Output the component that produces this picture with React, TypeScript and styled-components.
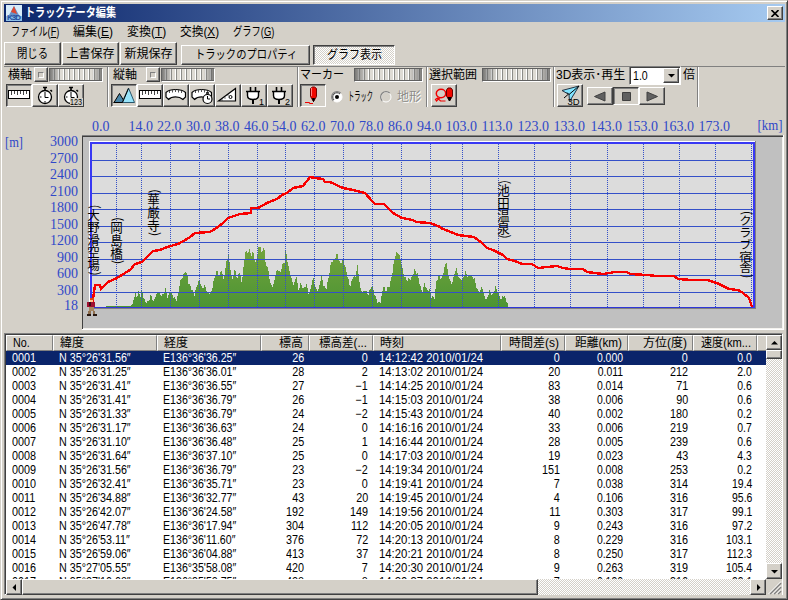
import React, { useLayoutEffect, useRef, useState } from "react";
import styled, { createGlobalStyle, css } from "styled-components";

const FACE = "#d4d0c8";
const SANS = '"Liberation Sans", "Noto Sans CJK JP", sans-serif';
const CHECKER = "repeating-conic-gradient(#ffffff 0 25%, #d4d0c8 0 50%) 0 0 / 2px 2px";

const Global = createGlobalStyle`
  *, *::before, *::after { box-sizing: border-box; }
  body { margin: 0; background: ${FACE}; font: 12px/14px ${SANS}; color: #000; }
`;

const raised = css`
  border: 1px solid;
  border-color: #ffffff #404040 #404040 #ffffff;
  box-shadow: inset -1px -1px 0 #808080;
`;
const pressed = css`
  border: 1px solid;
  border-color: #404040 #ffffff #ffffff #404040;
  box-shadow: inset 1px 1px 0 #808080;
`;

const Window = styled.div`
  width: 788px;
  height: 600px;
  display: flex;
  flex-direction: column;
  padding: 3px 2px 3px 2px;
  background: ${FACE};
  border: 1px solid;
  border-color: ${FACE} #404040 #404040 ${FACE};
  box-shadow: inset 1px 1px 0 #ffffff, inset -1px -1px 0 #808080;
  overflow: hidden;
`;

const TitleBar = styled.header`
  height: 18px;
  flex: none;
  margin: 0 0 0 1px;
  display: flex;
  align-items: center;
  gap: 3px;
  padding: 0 2px;
  background: linear-gradient(90deg, #0a246a, #a6caf0);
  color: #fff;
  font-weight: 700;
`;

const CloseButton = styled.button`
  ${raised}
  width: 16px;
  height: 14px;
  margin-left: auto;
  padding: 0;
  display: flex;
  align-items: center;
  justify-content: center;
  background: ${FACE};
`;

const MenuBar = styled.nav`
  height: 19px;
  flex: none;
  display: flex;
  align-items: center;
  padding-left: 8px;
  gap: 14px;
`;

const CommandRow = styled.div`
  height: 25px;
  flex: none;
  display: flex;
  align-items: flex-end;
  padding: 0 0 1px 1px;
  gap: 1px;
`;

const PushButton = styled.button<{ $w: number; $h: number; $down?: boolean; $gap?: number }>`
  ${(p) => (p.$down ? pressed : raised)}
  width: ${(p) => p.$w}px;
  height: ${(p) => p.$h}px;
  margin-left: ${(p) => p.$gap ?? 0}px;
  padding: 0;
  display: flex;
  align-items: center;
  justify-content: center;
  background: ${(p) => (p.$down ? CHECKER : FACE)};
  font: inherit;
`;

const ToolStrip = styled.div`
  height: 43px;
  flex: none;
  display: flex;
  margin-left: 1px;
  border-top: 1px solid #808080;
`;

const Group = styled.section<{ $w: number }>`
  width: ${(p) => p.$w}px;
  height: 40px;
  padding: 0 0 0 2px;
  display: flex;
  flex-direction: column;
  justify-content: space-between;
  border-right: 1px solid #808080;
  box-shadow: 1px 0 0 #ffffff;
`;

const GroupHead = styled.div<{ $inset?: number }>`
  height: 15px;
  display: flex;
  align-items: center;
  padding-left: ${(p) => p.$inset ?? 0}px;
`;

const GroupTools = styled.div<{ $inset?: number }>`
  height: 23px;
  display: flex;
  align-items: center;
  padding-left: ${(p) => p.$inset ?? 0}px;
`;

const IconButton = styled.button<{ $down?: boolean; $h?: number }>`
  ${(p) => (p.$down ? pressed : raised)}
  width: 26px;
  height: ${(p) => p.$h ?? 23}px;
  padding: 0;
  display: flex;
  background: ${FACE};
  & > svg { margin: -1px; flex: none; }
`;

const ResetButton = styled.button<{ $gap: number }>`
  ${raised}
  width: 14px;
  height: 15px;
  margin: 0 1px 0 ${(p) => p.$gap}px;
  padding: 0;
  display: flex;
  flex: none;
  align-items: center;
  justify-content: center;
  background: ${FACE};
  &::after {
    content: "";
    width: 6px;
    height: 6px;
    flex: none;
    border: 1px solid;
    border-color: #808080 #fff #fff #808080;
    background: ${FACE};
  }
`;

const Dial = styled.div<{ $w: number; $gap?: number }>`
  width: ${(p) => p.$w}px;
  height: 14px;
  flex: none;
  margin-left: ${(p) => p.$gap ?? 0}px;
  border: 1px solid;
  border-color: #606060 #ffffff #ffffff #606060;
  background:
    linear-gradient(90deg, rgba(80,80,80,.7), rgba(110,110,110,.5) 8%, rgba(130,130,130,.3) 15%, transparent 20%, transparent 80%, rgba(130,130,130,.3) 85%, rgba(110,110,110,.5) 92%, rgba(80,80,80,.7)),
    repeating-linear-gradient(90deg, #dedbd4 0 3px, #ffffff 3px 4px, #8c8c88 4px 5px);
  box-shadow: inset 0 -1px 0 #606060;
`;

const Radio = styled.label<{ $off?: boolean; $gap: number }>`
  display: flex;
  align-items: center;
  gap: 5px;
  margin: 3px 0 0 ${(p) => p.$gap}px;
  color: ${(p) => (p.$off ? "#8c8c88" : "#000")};
  text-shadow: ${(p) => (p.$off ? "1px 1px 0 #fff" : "none")};
`;

const Combo = styled.div`
  width: 52px;
  height: 19px;
  margin: 1px 2px 0 4px;
  display: flex;
  flex: none;
  padding: 1px;
  background: #fff;
  border: 1px solid;
  border-color: #808080 #fff #fff #808080;
  box-shadow: inset 1px 1px 0 #404040;
`;
const ComboValue = styled.span`
  flex: 1;
  padding: 1px 0 0 2px;
  line-height: 13px;
`;
const ArrowButton = styled.button<{ $w?: number; $h?: number }>`
  ${raised}
  flex: none;
  width: ${(p) => p.$w ?? 16}px;
  height: ${(p) => p.$h ?? 15}px;
  padding: 0;
  display: flex;
  align-items: center;
  justify-content: center;
  background: ${FACE};
`;

const ChartBox = styled.figure`
  margin: 0 0 0 1px;
  height: 224px;
  flex: none;
`;

const ChartSvg = styled.svg`
  display: block;
  & text { font-family: "Liberation Serif", serif; font-size: 14px; fill: #3048c8; }
  & text.place {
    font-family: "Noto Sans CJK JP", sans-serif;
    font-size: 12.5px;
    fill: #000;
    writing-mode: vertical-rl;
  }
`;

const ListView = styled.section`
  width: 779px;
  height: 262px;
  flex: none;
  margin-left: 1px;
  padding: 1px 0 0 1px;
  display: grid;
  grid-template-columns: 760px 16px;
  grid-template-rows: 244px 16px;
  border: 1px solid;
  border-color: #808080 #fff #fff #808080;
  box-shadow: inset 1px 1px 0 #404040;
  background: #fff;
`;

const Rows = styled.div`
  overflow: hidden;
`;

const COLS = "47px 104px 104px 48px 64px 128px 64px 63px 65px 64px 9px";

const HeaderRow = styled.div`
  display: grid;
  grid-template-columns: ${COLS};
  height: 16px;
`;
const HeaderCell = styled.div<{ $right?: boolean }>`
  display: flex;
  align-items: center;
  justify-content: ${(p) => (p.$right ? "flex-end" : "flex-start")};
  padding: 0 5px 0 6px;
  background: ${FACE};
  overflow: hidden;
  border: 1px solid;
  border-color: #fff #808080 #808080 #fff;
`;

const Row = styled.div<{ $selected?: boolean }>`
  display: grid;
  grid-template-columns: ${COLS};
  height: 14px;
  background: ${(p) => (p.$selected ? "#0a246a" : "#fff")};
  color: ${(p) => (p.$selected ? "#fff" : "#000")};
`;
const Cell = styled.div<{ $right?: boolean; $scale: number }>`
  text-align: ${(p) => (p.$right ? "right" : "left")};
  padding: 0 5px 0 6px;
  line-height: 14px;
  white-space: nowrap;
  & > span {
    display: inline-block;
    transform: scaleX(${(p) => p.$scale});
    transform-origin: ${(p) => (p.$right ? "right" : "left")};
  }
`;

const VScroll = styled.div`
  display: flex;
  flex-direction: column;
  background: ${CHECKER};
`;
const HScroll = styled.div`
  display: flex;
  background: ${CHECKER};
`;
const Thumb = styled.div<{ $w: number; $h: number }>`
  ${raised}
  width: ${(p) => p.$w}px;
  height: ${(p) => p.$h}px;
  background: ${FACE};
`;
const Spring = styled.div`
  flex: 1;
`;
const Grip = styled.div`
  background: ${FACE};
`;

const FitBox = styled.span<{ $w: number }>`
  display: block;
  flex: none;
  width: ${(p) => p.$w}px;
  white-space: nowrap;
  line-height: 14px;
`;
const FitInner = styled.span`
  display: inline-block;
  transform-origin: left center;
`;

/* Condenses or widens a label so that it fills exactly the given width. */
function Fit({ w, children }: { w: number; children: React.ReactNode }) {
  const ref = useRef<HTMLSpanElement>(null);
  const [k, setK] = useState(1);
  useLayoutEffect(() => {
    if (ref.current && ref.current.offsetWidth) setK(w / ref.current.offsetWidth);
  }, [w]);
  return (
    <FitBox $w={w}>
      <FitInner ref={ref} style={{ transform: `scaleX(${k})` }}>{children}</FitInner>
    </FitBox>
  );
}

/* ---------- icons ---------- */

const Icon = ({ children, h = 23 }: { children: React.ReactNode; h?: number }) => (
  <svg width="26" height={h} viewBox={`0 0 26 ${h}`} fill="none" stroke="#000">{children}</svg>
);

const Ruler = () => (
  <Icon>
    <path d="M2.500 6.500h21v8h-21z" fill="#fff" shapeRendering="crispEdges" />
    <path d="M5.500 7v4M8.500 7v3M11.500 7v4M14.500 7v3M17.500 7v4M20.500 7v3" stroke="#444" shapeRendering="crispEdges" />
  </Icon>
);
const Watch = ({ digits }: { digits?: boolean }) => (
  <Icon>
    <path d="M11 3.500h4M13 4v3M18.500 6l1.500 1.500" strokeWidth="1.600" />
    <circle cx="13" cy="13" r="6.500" fill="#fff" strokeWidth="1.300" />
    <path d="M13 8v5.500h3.500M8 13h1.500M13 17v1.500" />
    {digits && (
      <>
        <path d="M12 14h13v8H12z" fill={FACE} stroke="none" />
        <text x="12" y="21" fontSize="8.500" textLength="12" lengthAdjust="spacingAndGlyphs" fill="#000" stroke="none">123</text>
      </>
    )}
  </Icon>
);
const Mountains = () => (
  <Icon>
    <path d="M3 18.500L8.500 9.500L14 18.500z" fill="#4a86a8" />
    <path d="M11 18.500L17.500 4L23.500 18.500z" fill="#98e4fa" stroke="#28566c" />
    <path d="M2.500 18.500h9l6-14" />
  </Icon>
);
const Gauge = ({ clock }: { clock?: boolean }) => (
  <Icon>
    <path d="M3 8.500C7 4.500 18 4.500 22.500 8.500V13l-2.500 2.500C16 12 9 12 5.500 15.500L3 13z" fill="#fff" strokeWidth="1.200" />
    <path d="M6.500 7v2M9.500 6v2.500M12.500 5.500v2.500M15.500 6v2.500M18.500 7v2" stroke="#555" />
    {clock && (
      <>
        <path d="M17 9h3" strokeWidth="1.500" />
        <circle cx="18.500" cy="15" r="4.500" fill="#fff" strokeWidth="1.200" />
        <path d="M18.500 12v3h2.500" />
      </>
    )}
  </Icon>
);
const SetSquare = () => (
  <Icon>
    <path d="M3.500 17L20.500 4.500V17z" fill="#fff" strokeWidth="1.200" />
    <circle cx="15.500" cy="13" r="1.500" />
    <path d="M7 15.500v1M10 13.500v1M13 10.500v1" />
  </Icon>
);
const Plug = ({ n }: { n: string }) => (
  <Icon>
    <path d="M9.500 3v5M14.500 3v5" strokeWidth="1.600" />
    <path d="M5 7.500h14M6.500 8v3.500c0 2.500 2.500 4 5.500 4s5.500-1.500 5.500-4V8" fill="#fff" strokeWidth="1.400" />
    <path d="M12 15.500v4.500" strokeWidth="2" />
    <text x="18" y="21" fontSize="9" fill="#000" stroke="none">{n}</text>
  </Icon>
);
const Pencil = () => (
  <Icon>
    <path d="M10.500 4.500l2-1.500h2l2 1.500v8l-3 5-3-5z" fill="#f00800" stroke="#700" />
    <path d="M11.500 4v8" stroke="#ff8080" />
    <path d="M12.500 14.500h2l-1 3z" fill="#000" />
    <path d="M5 18.500h4.500v1h3.500" stroke="#f00000" />
  </Icon>
);
const LassoPencil = () => (
  <Icon>
    <ellipse cx="10" cy="9.500" rx="4.700" ry="4.200" stroke="#f00000" strokeWidth="1.500" />
    <path d="M9 13.500l-3.500 3.500-1-1.500 2-1.500 3 3h5" stroke="#f00000" strokeWidth="1.200" />
    <path d="M15.500 6l1.500-2h3l1.500 2v6l-3 5-3-5z" fill="#f00800" stroke="#600" />
    <path d="M17 13.500h3l-1.500 3.500z" fill="#000" />
  </Icon>
);
const Plane3D = () => (
  <Icon>
    <path d="M5 6.500L22 2L12.500 17.500L12 10.500z" fill="#80e4ff" stroke="#234" />
    <path d="M22 2L12 10.500L10 8.500M7 14L11 10.500" />
    <text x="10.500" y="21" fontSize="9.500" textLength="12" fill="#000" stroke="none">3D</text>
  </Icon>
);
const Transport = ({ d }: { d: string }) => (
  <Icon h={19}><path d={d} fill="#606060" stroke="#404040" /></Icon>
);
const Arrow = ({ dir }: { dir: "up" | "down" | "left" | "right" }) => {
  const d = {
    up: "M0 5.500h7L3.500 2z",
    down: "M0 2h7L3.500 5.500z",
    left: "M5 0v7L1.500 3.500z",
    right: "M2 0v7L5.500 3.500z",
  }[dir];
  return <svg width="7" height="7"><path d={d} /></svg>;
};
const RadioMark = ({ on }: { on?: boolean }) => (
  <svg width="12" height="12" fill="none">
    <circle cx="6" cy="6" r="5" fill={on ? "#fff" : FACE} stroke="#fff" />
    <path d="M2.200 9.800A5.300 5.300 0 0 1 9.800 2.200" stroke="#808080" strokeWidth="1.200" />
    {on && <path d="M3 9A4.200 4.200 0 0 1 9 3" stroke="#404040" />}
    {on && <circle cx="6" cy="6" r="2" fill="#000" />}
  </svg>
);
const AppIcon = () => (
  <svg width="16" height="16">
    <path d="M0 0h16v16H0z" fill="#d8ecfa" />
    <path d="M0 11h16v5H0z" fill="#8cc0e8" />
    <path d="M8 1L2 12h12z" fill="#6890c8" />
    <path d="M8 1L5 7l6 2z" fill="#e04830" />
    <text x="1" y="15" fontSize="8" fontWeight="700" textLength="14" fill="#2850a0">K3D</text>
  </svg>
);

/* ---------- chart ---------- */

type Trace = { x0: number; p: number[] };

/* Samples are thirds of a pixel, measured from (x0, 110). */
const expand = (traces: Trace[]): [number, number][] =>
  traces.flatMap(({ x0, p }) => {
    const out: [number, number][] = [];
    for (let i = 0; i < p.length; i += 2) out.push([x0 + p[i] / 3, 110 + p[i + 1] / 3]);
    return out;
  });

const track = expand([
  { x0: 0, p: [275,592, 281,545, 285,526, 299,524, 303,538, 310,530, 325,515, 350,505, 375,490, 390,480, 405,463, 425,457, 440,440, 460,423, 480,421, 500,411, 535,403, 560,388] },
  { x0: 190, p: [0,380, 15,368, 60,365, 75,356, 100,340, 115,323, 150,313, 182,309, 184,295, 205,293, 230,280, 260,267, 275,254, 290,250, 310,234, 340,227, 360,201, 375,204, 398,206, 405,215, 420,216, 460,233, 490,240, 525,250, 545,272, 555,281] },
  { x0: 380, p: [12,282, 22,290, 40,308, 65,323, 100,329, 107,337, 150,339, 175,347, 190,358, 235,374, 282,382, 305,400, 322,415, 340,419, 370,434, 380,448, 405,452, 425,463, 455,463, 475,475, 500,471, 530,467, 550,473] },
  { x0: 570, p: [0,476, 38,477, 50,486, 98,491, 135,485, 170,487, 180,492, 230,494, 260,498, 312,499, 325,508, 365,509, 410,511, 440,520, 478,537, 505,540, 520,550, 538,565, 547,592] },
]);

const ground = expand([
  { x0: 0, p: [300,592, 320,589, 390,588, 398,580, 402,565, 406,548, 410,562, 416,545, 421,560, 426,538, 430,560, 436,576, 445,575, 450,565, 453,553, 460,576, 466,560, 475,545, 480,555, 490,553, 497,537, 503,562, 512,543, 520,562, 530,570, 536,545, 540,515, 548,500, 556,483, 563,500, 566,522] },
  { x0: 190, p: [0,525, 8,545, 14,555, 18,535, 28,508, 36,535, 45,525, 52,548, 62,550, 68,530, 75,495, 82,483, 88,500, 94,478, 100,508, 106,480, 110,450, 115,436, 120,465, 126,512, 135,476, 142,508, 148,483, 155,517, 160,480, 166,423, 172,430, 178,418, 184,437, 190,425, 196,462, 202,435, 206,412, 212,408, 215,432, 222,405, 226,455, 235,480, 242,525, 250,528, 256,495, 264,476, 270,490, 278,462, 284,455, 287,415, 294,465, 304,505, 312,527, 319,495, 325,542, 332,520, 340,537, 350,523, 357,557, 364,525, 371,502, 376,535, 385,542, 394,496, 402,530, 410,535, 416,500, 424,455, 432,450, 442,430, 450,462, 460,448, 468,480, 480,530, 490,498, 496,505, 502,463, 506,495, 512,540, 520,548, 527,538, 534,557, 545,526, 552,545, 556,560, 564,578, 572,577, 580,528, 588,545, 594,530] },
  { x0: 380, p: [28,530, 36,495, 42,455, 48,430, 56,430, 64,460, 70,490, 80,510, 95,505, 104,480, 114,495, 120,525, 127,547, 134,518, 140,540, 150,540, 154,560, 164,563, 170,510, 178,498, 184,510, 192,480, 199,453, 204,490, 214,524, 222,500, 228,473, 238,508, 248,508, 257,486, 264,500, 270,493, 284,508, 292,540, 300,547, 306,525, 312,555, 320,570, 328,543, 338,557, 347,530, 356,550, 364,572, 368,555, 376,562, 382,580, 384,592] },
]);

const at = (pts: [number, number][], x: number) => {
  const i = pts.findIndex((q) => q[0] >= x);
  if (i <= 0) return pts[i === 0 ? 0 : pts.length - 1][1];
  const [a, b] = [pts[i - 1], pts[i]];
  return a[1] + ((b[1] - a[1]) * (x - a[0])) / (b[0] - a[0] || 1);
};

let terrain = "M100 307";
for (let x = 100; x < 508; x++) {
  const y = Math.round(at(ground, x + 0.5) + (x > 133 ? ((x * 7) % 3) - 1 : 0));
  terrain += `V${Math.min(307, y)}H${x + 1}`;
}
terrain += "V307z";

const hLines = [160, 176, 193, 209, 226, 242, 259, 275, 292];
const vLines = [116, 141, 170, 199, 228, 257, 285, 314, 343, 372, 401, 430, 462, 498, 534, 570, 607, 643, 679, 715, 751];
const yLabels = ["3000", "2700", "2400", "2100", "1800", "1500", "1200", "900", "600", "300", "18"];
const yBase = [146, 163, 179, 196, 212, 229, 245, 262, 278, 295, 310];
const xLabels: [number, string][] = [
  [92, "0.0"], [128.500, "14.0"], [157, "22.0"], [186, "30.0"], [215, "38.0"], [244, "46.0"], [272, "54.0"],
  [301, "62.0"], [330, "70.0"], [359, "78.0"], [388, "86.0"], [417, "94.0"], [445.500, "103.0"], [481.500, "113.0"],
  [517.500, "123.0"], [553.500, "133.0"], [590.500, "143.0"], [626.500, "153.0"], [662.500, "163.0"], [698.500, "173.0"],
];
const places: [number, number, number, string][] = [
  [93.500, 204.500, 71, "大野滑空場"],
  [116.500, 217, 47, "岡島橋"],
  [153.500, 189, 47, "華厳寺"],
  [503.500, 180, 59, "池田温泉"],
  [745.500, 211, 67, "クラブ宿舎"],
];

const Chart = () => (
  <ChartBox>
    <ChartSvg width="780" height="224" viewBox="4 109 780 224">
      <defs>
        <linearGradient id="hill" x1="0" y1="0" x2="0" y2="1">
          <stop offset="0" stopColor="#74a43c" />
          <stop offset="1" stopColor="#4c9434" />
        </linearGradient>
      </defs>
      {xLabels.map(([x, s]) => <text key={s} x={x} y="131">{s}</text>)}
      <text x="757.500" y="130" textLength="25" lengthAdjust="spacingAndGlyphs">[km]</text>
      <text x="5" y="147" textLength="18" lengthAdjust="spacingAndGlyphs">[m]</text>
      {yLabels.map((s, i) => <text key={s} x="78" y={yBase[i]} textAnchor="end">{s}</text>)}
      <g shapeRendering="crispEdges">
        <path d="M82 135h702v195H82z" fill="#fff" />
        <path d="M82 135h701v194H82z" fill="#808080" />
        <path d="M83 136h700v193H83z" fill="#c0c0c0" />
        <path d="M82.500 329V136.500H783" fill="none" stroke="#404040" />
        <path d="M83 328.500H782.500V137" fill="none" stroke="#f4f2ee" />
        <path d="M89 141h667v168H89z" fill="#808080" />
        <path d="M89 141h666v167H89z" fill="#fff" />
        <path d="M90 142h665v166H90z" fill="#dcdcdc" />
        <path d={terrain} fill="url(#hill)" />
        {vLines.map((x) => <path key={x} d={`M${x + 0.5} 144V307`} stroke="#3450c8" strokeDasharray="1 1" />)}
        {hLines.map((y) => <path key={y} d={`M90 ${y + 0.5}H755`} stroke="#3450c8" />)}
        <path d="M90 307.500H755" stroke="#3038d8" />
        <path d="M90 143H754M91 142V308M754 142V308" stroke="#3838f4" strokeWidth="2" />
      </g>
      <polyline points={track.map((q) => q.map(Math.round).join(",")).join(" ")} fill="none" stroke="#f80000" strokeWidth="2.400" shapeRendering="crispEdges" />
      {places.map(([x, y, len, s]) => (
        <text key={s} className="place" x={x} y={y} textLength={len} lengthAdjust="spacingAndGlyphs">
          <tspan dx="2.500">(</tspan><tspan dx="-2.500">{s}</tspan><tspan dx="2.500">)</tspan>
        </text>
      ))}
      <g shapeRendering="crispEdges">
        <path d="M90 298h4v2h-4z" fill="#e04810" />
        <path d="M90 300h3v2h-3z" fill="#ffc890" />
        <path d="M87 302h8v5H87z" fill="#a01030" />
        <path d="M89 302h2v4h-2z" fill="#400818" />
        <path d="M89 307h5v4h-5z" fill="#a88860" />
        <path d="M88 311h3v3h-3zM93 311h2v3h-2z" fill="#907050" />
        <path d="M87 314h4v2h-4zM93 314h4v2h-4z" fill="#281810" />
      </g>
    </ChartSvg>
  </ChartBox>
);

/* ---------- list ---------- */

const columns: { label: string; w: number; right?: boolean; scale: number }[] = [
  { label: "No.", w: 17, scale: 0.9 },
  { label: "緯度", w: 24, scale: 0.895 },
  { label: "経度", w: 24, scale: 0.885 },
  { label: "標高", w: 24, right: true, scale: 0.9 },
  { label: "標高差(...", w: 48, right: true, scale: 0.9 },
  { label: "時刻", w: 24, scale: 0.945 },
  { label: "時間差(s)", w: 50, right: true, scale: 0.9 },
  { label: "距離(km)", w: 47, right: true, scale: 0.87 },
  { label: "方位(度)", w: 44, right: true, scale: 0.9 },
  { label: "速度(km...", w: 50, right: true, scale: 0.87 },
];

const points = `31.56|36'36.25|26|0|14:12:42|0|0.000|0|0.0
31.25|36'36.01|28|2|14:13:02|20|0.011|212|2.0
31.41|36'36.55|27|-1|14:14:25|83|0.014|71|0.6
31.41|36'36.79|26|-1|14:15:03|38|0.006|90|0.6
31.33|36'36.79|24|-2|14:15:43|40|0.002|180|0.2
31.17|36'36.63|24|0|14:16:16|33|0.006|219|0.7
31.10|36'36.48|25|1|14:16:44|28|0.005|239|0.6
31.64|36'37.10|25|0|14:17:03|19|0.023|43|4.3
31.56|36'36.79|23|-2|14:19:34|151|0.008|253|0.2
32.41|36'35.71|23|0|14:19:41|7|0.038|314|19.4
34.88|36'32.77|43|20|14:19:45|4|0.106|316|95.6
42.07|36'24.58|192|149|14:19:56|11|0.303|317|99.1
47.78|36'17.94|304|112|14:20:05|9|0.243|316|97.2
53.11|36'11.60|376|72|14:20:13|8|0.229|316|103.1
59.06|36'04.88|413|37|14:20:21|8|0.250|317|112.3
27'05.55|35'58.08|420|7|14:20:30|9|0.263|319|105.4
27'10.08|35'52.75|428|8|14:20:37|7|0.190|316|99.1`
  .split("\n")
  .map((line, i) => {
    const [lat, lon, alt, diff, time, ...rest] = line.split("|");
    return [
      String(i + 1).padStart(4, "0"),
      `N 35°${lat.includes("'") ? lat : "26'" + lat}″`,
      `E136°${lon}″`,
      alt,
      diff.replace("-", "−"),
      `${time} 2010/01/24`,
      ...rest,
    ];
  });

const menus: [string, string, number][] = [
  ["ファイル", "F", 48], ["編集", "E", 40], ["変換", "T", 39], ["交換", "X", 39], ["グラフ", "G", 41],
];

export default function App() {
  return (
    <>
      <Global />
      <Window>
        <TitleBar>
          <AppIcon />
          <Fit w={91}>トラックデータ編集</Fit>
          <CloseButton>
            <svg width="8" height="7"><path d="M0.500 0L7.500 7M7.500 0L0.500 7" stroke="#000" strokeWidth="1.600" /></svg>
          </CloseButton>
        </TitleBar>
        <MenuBar>
          {menus.map(([label, key, w]) => (
            <Fit key={key} w={w}>{label}(<u>{key}</u>)</Fit>
          ))}
        </MenuBar>
        <CommandRow>
          <PushButton $w={57} $h={23}><Fit w={31}>閉じる</Fit></PushButton>
          <PushButton $w={57} $h={23}><Fit w={48}>上書保存</Fit></PushButton>
          <PushButton $w={57} $h={23}><Fit w={48}>新規保存</Fit></PushButton>
          <PushButton $w={129} $h={20} $gap={3}><Fit w={102}>トラックのプロパティ</Fit></PushButton>
          <PushButton $w={82} $h={20} $gap={2} $down><Fit w={55}>グラフ表示</Fit></PushButton>
        </CommandRow>
        <ToolStrip>
          <Group $w={104}>
            <GroupHead $inset={2}>
              <Fit w={24}>横軸</Fit>
              <ResetButton $gap={2} />
              <Dial $w={54} />
            </GroupHead>
            <GroupTools>
              <IconButton $down><Ruler /></IconButton>
              <IconButton><Watch /></IconButton>
              <IconButton><Watch digits /></IconButton>
            </GroupTools>
          </Group>
          <Group $w={190}>
            <GroupHead $inset={3}>
              <Fit w={24}>縦軸</Fit>
              <ResetButton $gap={9} />
              <Dial $w={54} />
            </GroupHead>
            <GroupTools $inset={1}>
              <IconButton $down><Mountains /></IconButton>
              <IconButton><Ruler /></IconButton>
              <IconButton><Gauge /></IconButton>
              <IconButton><Gauge clock /></IconButton>
              <IconButton><SetSquare /></IconButton>
              <IconButton><Plug n="1" /></IconButton>
              <IconButton><Plug n="2" /></IconButton>
            </GroupTools>
          </Group>
          <Group $w={129}>
            <GroupHead>
              <Fit w={44}>マーカー</Fit>
              <Dial $w={69} $gap={10} />
            </GroupHead>
            <GroupTools>
              <IconButton $down><Pencil /></IconButton>
              <Radio $gap={5}><RadioMark on /><Fit w={25}>トラック</Fit></Radio>
              <Radio $gap={7} $off><RadioMark /><Fit w={24}>地形</Fit></Radio>
            </GroupTools>
          </Group>
          <Group $w={127}>
            <GroupHead>
              <Fit w={48}>選択範囲</Fit>
              <Dial $w={69} $gap={5} />
            </GroupHead>
            <GroupTools $inset={2}>
              <IconButton><LassoPencil /></IconButton>
            </GroupTools>
          </Group>
          <Group $w={144}>
            <GroupHead>
              <Fit w={69}>3D表示･再生</Fit>
              <Combo>
                <ComboValue><Fit w={15}>1.0</Fit></ComboValue>
                <ArrowButton><Arrow dir="down" /></ArrowButton>
              </Combo>
              <Fit w={12}>倍</Fit>
            </GroupHead>
            <GroupTools $inset={1}>
              <IconButton><Plane3D /></IconButton>
              <GroupTools $inset={4}>
                <IconButton $h={18}><Transport d="M7.500 9.500L18 5v9z" /></IconButton>
                <IconButton $h={18} $down><Transport d="M9.500 5.500h8v8h-8z" /></IconButton>
                <IconButton $h={18}><Transport d="M18.500 9.500L8 5v9z" /></IconButton>
              </GroupTools>
            </GroupTools>
          </Group>
        </ToolStrip>
        <Chart />
        <ListView>
          <Rows>
            <HeaderRow>
              {columns.map((c) => (
                <HeaderCell key={c.label} $right={c.right}><Fit w={c.w}>{c.label}</Fit></HeaderCell>
              ))}
              <HeaderCell />
            </HeaderRow>
            {points.map((r, i) => (
              <Row key={r[0]} $selected={i === 0}>
                {r.map((v, j) => (
                  <Cell key={j} $right={columns[j].right} $scale={columns[j].scale}><span>{v}</span></Cell>
                ))}
              </Row>
            ))}
          </Rows>
          <VScroll>
            <ArrowButton><Arrow dir="up" /></ArrowButton>
            <Thumb $w={16} $h={9} />
            <Spring />
            <ArrowButton $h={16}><Arrow dir="down" /></ArrowButton>
          </VScroll>
          <HScroll>
            <ArrowButton $h={16}><Arrow dir="left" /></ArrowButton>
            <Thumb $w={516} $h={16} />
            <Spring />
            <ArrowButton $h={16}><Arrow dir="right" /></ArrowButton>
          </HScroll>
          <Grip>
            <svg width="16" height="16">
              <path d="M4 15L15 4M8 15L15 8M12 15L15 12" stroke="#808080" strokeWidth="1.600" />
              <path d="M2.500 15L15 2.500M6.500 15L15 6.500M10.500 15L15 10.500" stroke="#fff" />
            </svg>
          </Grip>
        </ListView>
      </Window>
    </>
  );
}
